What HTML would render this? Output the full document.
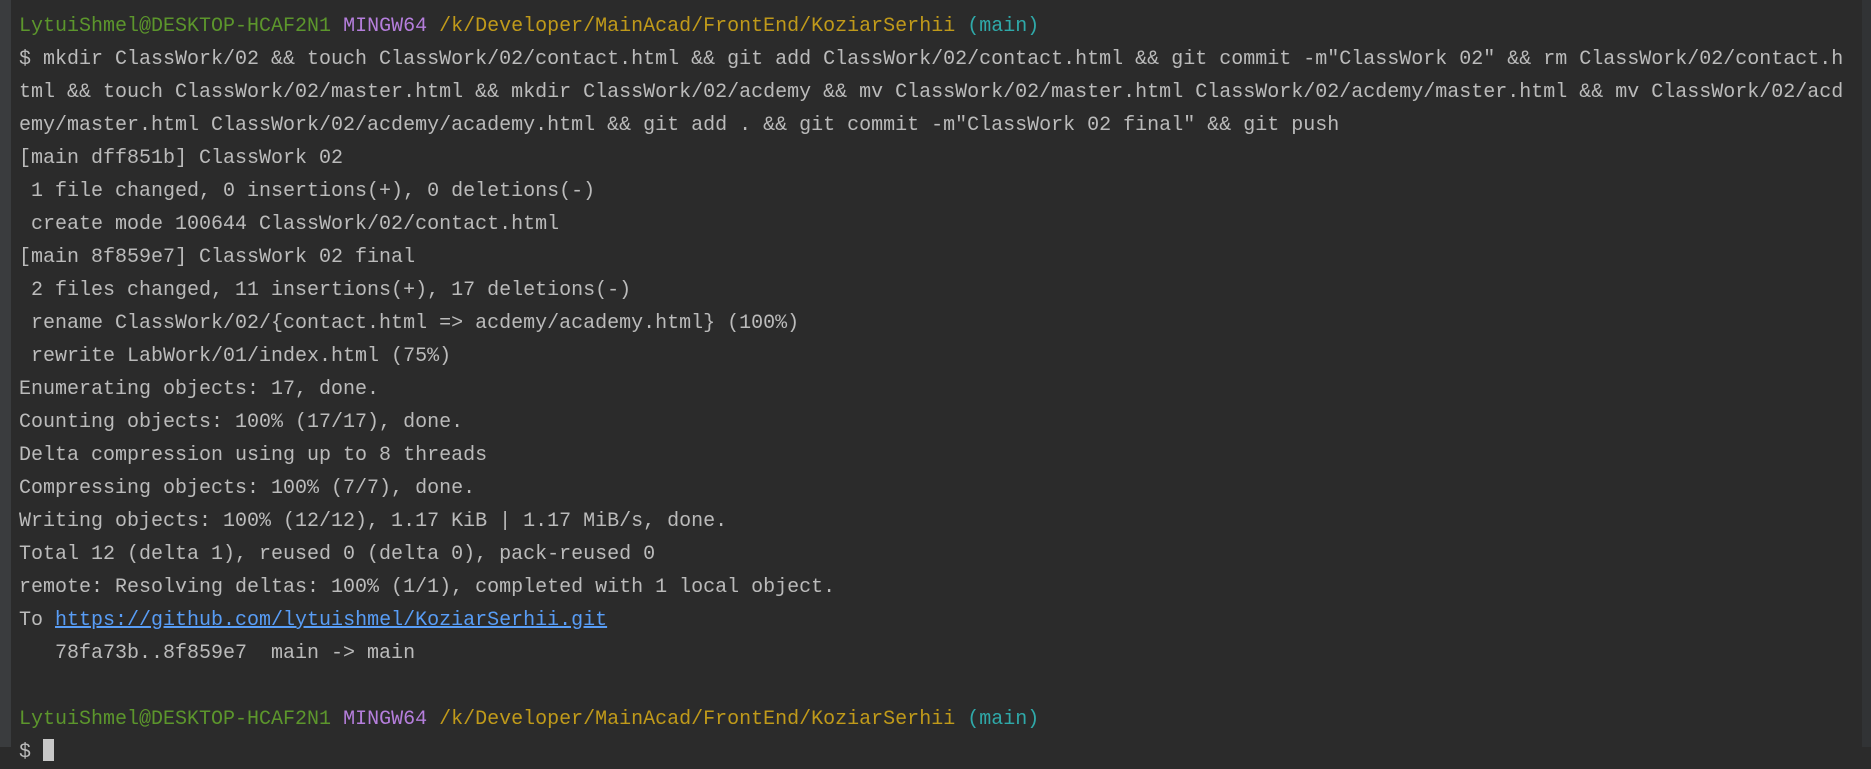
<!DOCTYPE html>
<html><head><meta charset="utf-8"><style>
html,body{margin:0;padding:0;}
body{width:1871px;height:747px;background:#2b2b2b;overflow:hidden;position:relative;}
.lb{position:absolute;left:0;top:0;width:11px;height:747px;background:#3a3c3e;}
.rb{position:absolute;right:0;top:0;width:9px;height:747px;background:#313335;}
pre{position:absolute;left:19px;top:10px;margin:0;font-family:"Liberation Mono",monospace;font-size:20px;line-height:33px;color:#bbbbbb;white-space:pre;}
.g{color:#5c962c}.m{color:#b57edc}.y{color:#c09a1a}.c{color:#2fa9a9}
a{color:#589df6;text-decoration:underline;}
.cur{display:inline-block;width:11px;height:22px;background:#c8c8c8;vertical-align:-4px;}
</style></head><body><div class="lb"></div><div class="rb"></div><pre><span class="g">LytuiShmel@DESKTOP-HCAF2N1</span> <span class="m">MINGW64</span> <span class="y">/k/Developer/MainAcad/FrontEnd/KoziarSerhii</span> <span class="c">(main)</span>
$ mkdir ClassWork/02 &amp;&amp; touch ClassWork/02/contact.html &amp;&amp; git add ClassWork/02/contact.html &amp;&amp; git commit -m"ClassWork 02" &amp;&amp; rm ClassWork/02/contact.h
tml &amp;&amp; touch ClassWork/02/master.html &amp;&amp; mkdir ClassWork/02/acdemy &amp;&amp; mv ClassWork/02/master.html ClassWork/02/acdemy/master.html &amp;&amp; mv ClassWork/02/acd
emy/master.html ClassWork/02/acdemy/academy.html &amp;&amp; git add . &amp;&amp; git commit -m"ClassWork 02 final" &amp;&amp; git push
[main dff851b] ClassWork 02
 1 file changed, 0 insertions(+), 0 deletions(-)
 create mode 100644 ClassWork/02/contact.html
[main 8f859e7] ClassWork 02 final
 2 files changed, 11 insertions(+), 17 deletions(-)
 rename ClassWork/02/{contact.html =&gt; acdemy/academy.html} (100%)
 rewrite LabWork/01/index.html (75%)
Enumerating objects: 17, done.
Counting objects: 100% (17/17), done.
Delta compression using up to 8 threads
Compressing objects: 100% (7/7), done.
Writing objects: 100% (12/12), 1.17 KiB | 1.17 MiB/s, done.
Total 12 (delta 1), reused 0 (delta 0), pack-reused 0
remote: Resolving deltas: 100% (1/1), completed with 1 local object.
To <a>https://github.com/lytuishmel/KoziarSerhii.git</a>
   78fa73b..8f859e7  main -&gt; main

<span class="g">LytuiShmel@DESKTOP-HCAF2N1</span> <span class="m">MINGW64</span> <span class="y">/k/Developer/MainAcad/FrontEnd/KoziarSerhii</span> <span class="c">(main)</span>
$ <span class="cur"></span></pre></body></html>
